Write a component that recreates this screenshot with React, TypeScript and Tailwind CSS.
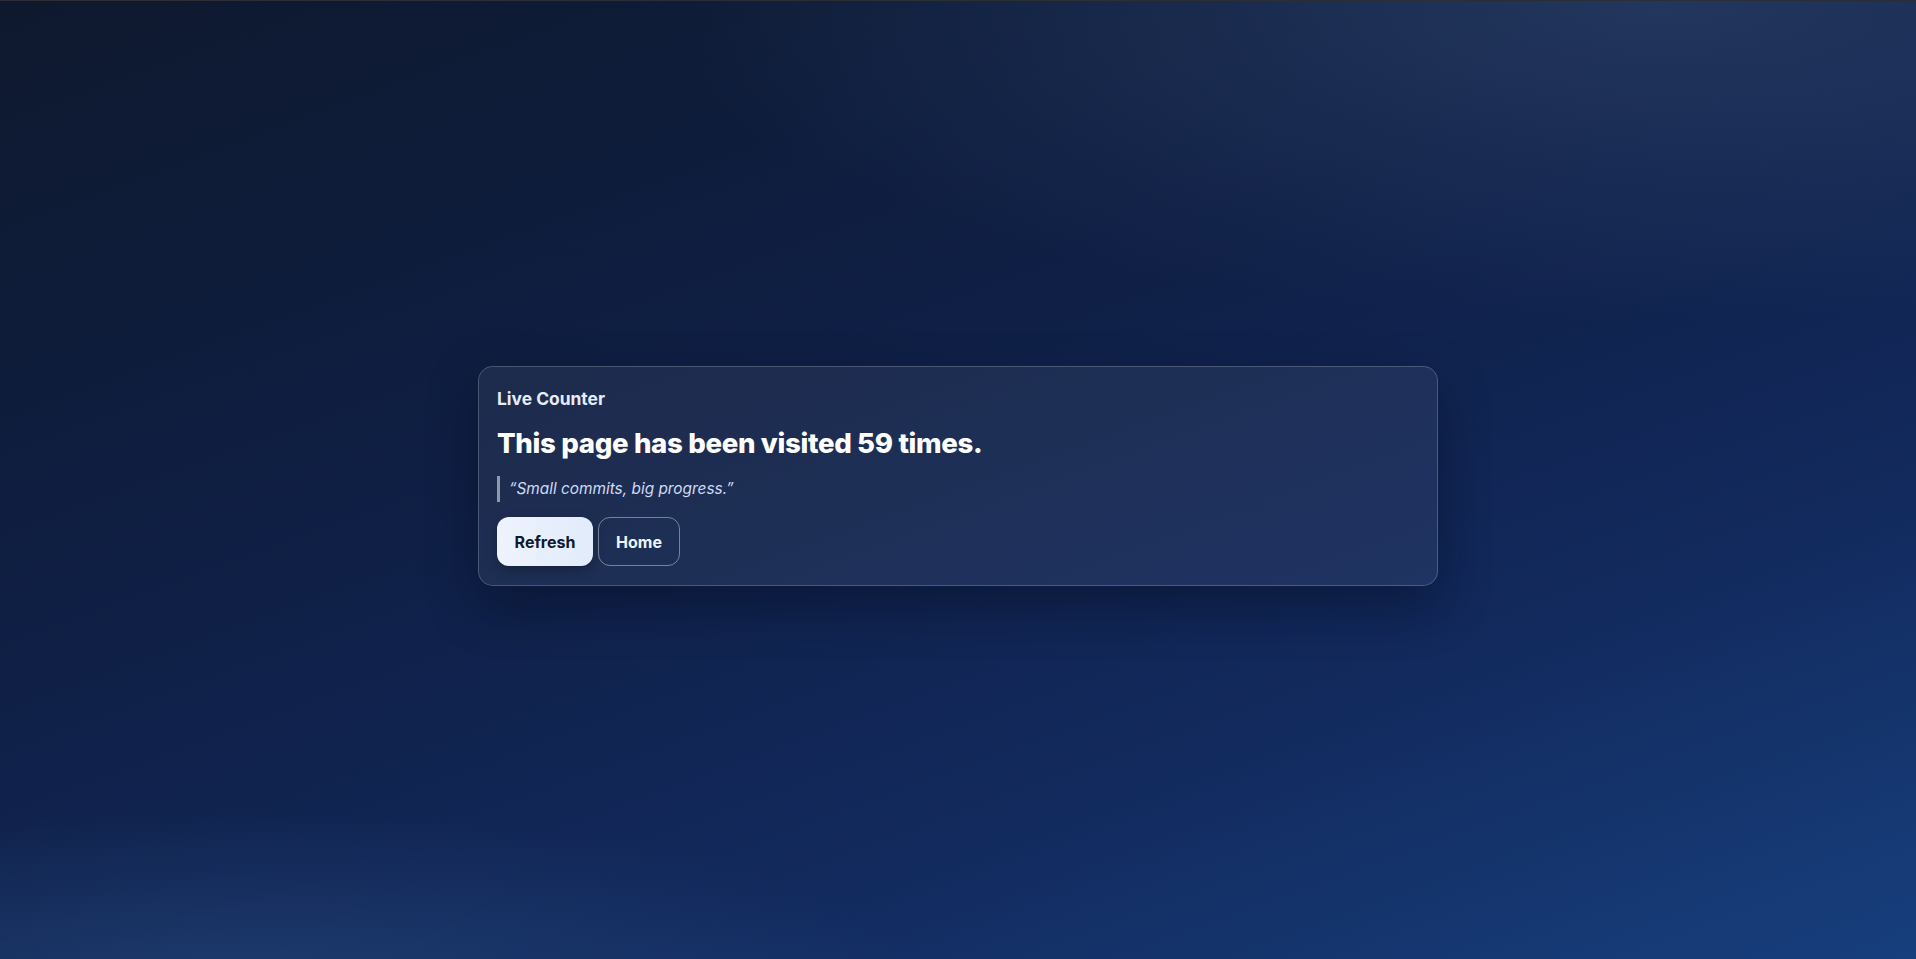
import React from "react";

export default function App() {
  return (
    <div
      className="min-h-screen w-full border-t border-[#2b2e35] flex items-center justify-center bg-[radial-gradient(ellipse_1000px_320px_at_1660px_0px,rgba(55,78,120,0.5),transparent),radial-gradient(ellipse_700px_180px_at_230px_990px,rgba(45,85,140,0.45),transparent),linear-gradient(160deg,#0e192e_0%,#0f1f45_40%,#12295c_70%,#173f7d_100%)]"
      style={{ fontFamily: "Inter, 'Noto Sans', sans-serif" }}
    >
      <div className="mb-[8px] w-[960px] rounded-[15px] border border-white/20 bg-white/[0.06] px-[18px] py-[19px] shadow-[0_20px_50px_rgba(5,10,30,0.45)]">
        <div className="text-[17.4px] leading-[26px] font-bold text-[#e6ecf6]">Live Counter</div>
        <h1 className="mt-[13px] text-[27.6px] leading-[36px] font-extrabold tracking-[-0.012em] text-white">
          This page has been visited 59 times.
        </h1>
        <blockquote className="mt-[15px] border-l-[3px] border-[#8f99ad] pl-[9px] text-[15.4px] leading-[26px] italic text-[#cfdaf3]">
          “Small commits, big progress.”
        </blockquote>
        <div className="mt-[15px] flex gap-[5px]">
          <button className="h-[49px] w-[96px] rounded-[12px] bg-gradient-to-r from-[#eef3fd] to-[#e2ebfb] text-[16px] font-bold text-[#0f1a2e] shadow-[0_4px_12px_rgba(0,0,0,0.25)]">
            Refresh
          </button>
          <button className="h-[49px] w-[82px] rounded-[12px] border border-white/40 text-[16px] font-bold text-[#eef3fb]">
            Home
          </button>
        </div>
      </div>
    </div>
  );
}
